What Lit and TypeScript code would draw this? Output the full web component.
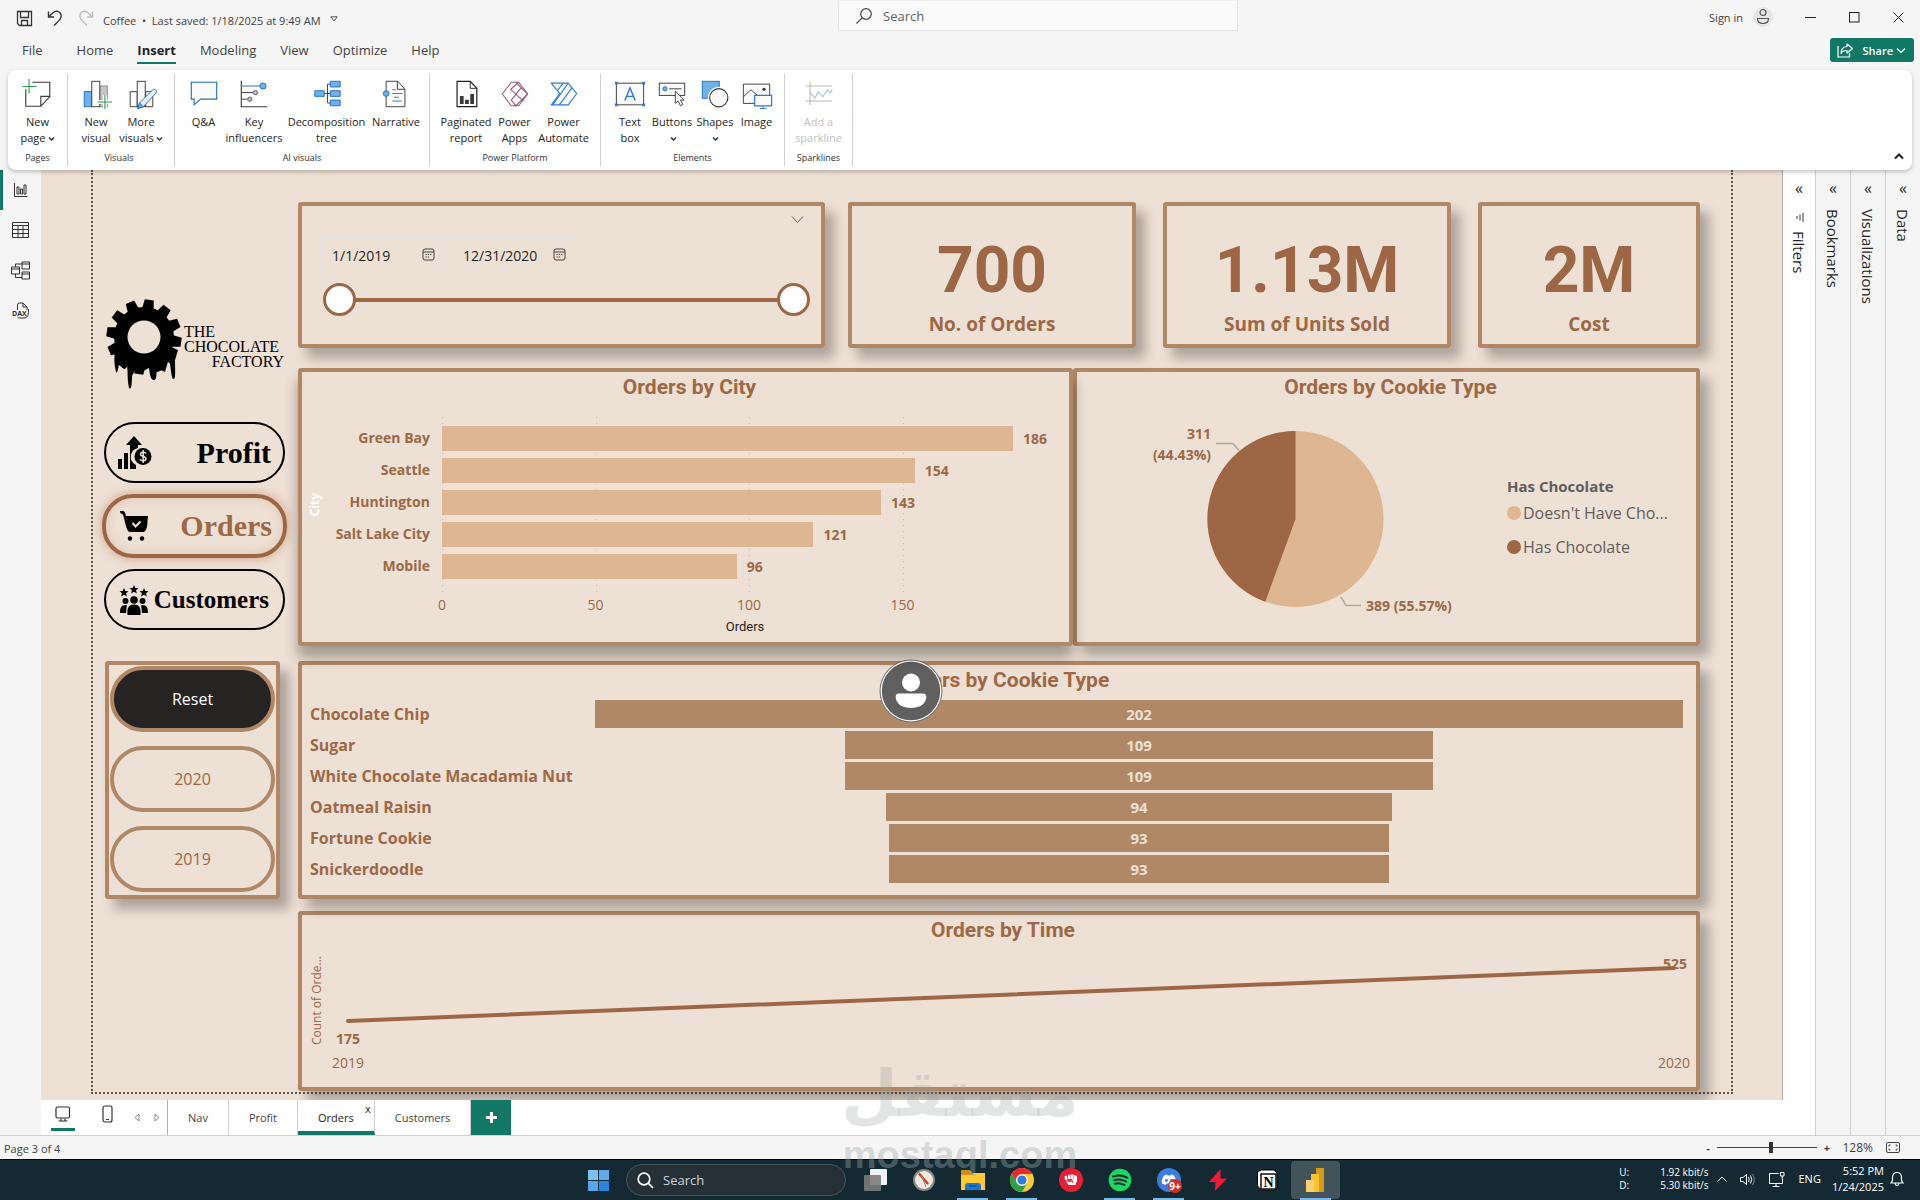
import { LitElement, html, svg, css, TemplateResult, SVGTemplateResult } from "lit";
import { customElement, state } from "lit/decorators.js";
import { classMap } from "lit/directives/class-map.js";
import { styleMap } from "lit/directives/style-map.js";

const INK = "#3b3a39";
const BLUE = "#1f6fc0";
const SKY = "#6fb1e8";
const GREEN = "#2f9e5a";

type Tool = { label: string[]; icon: SVGTemplateResult; width: number; menu?: boolean; off?: boolean };
type Group = { name: string; tools: Tool[] };

const caret = html`<svg class="caret" width="7" height="6" viewBox="0 0 7 6"><path d="M1 1.500 3.500 4 6 1.500" fill="none" stroke="#333" stroke-width="1.500" /></svg>`;

const toolIcons = {
  page: svg`<path d="M12 4.500H30.500V20L21 30H5V12M30.500 19.500H21V30" fill="none" stroke="${INK}" stroke-width="1.200"/><path d="M8.500 1V16.500M1.500 9H16.500" stroke="${GREEN}" stroke-width="1.200"/>`,
  visual: svg`<rect x="5.500" y="14.500" width="8" height="16" fill="${SKY}" stroke="${BLUE}"/><rect x="22" y="8.500" width="8" height="22" fill="#c8c6c4" stroke="#8a8886"/><rect x="13.500" y="3.500" width="8.500" height="27" fill="#fafafa" stroke="${INK}"/><path d="M27.500 18V33M20 25.500H35" stroke="#fff" stroke-width="4"/><path d="M27.500 18V33M20 25.500H35" stroke="${GREEN}" stroke-width="1.200"/>`,
  more: svg`<path d="M6.500 14.500H14V30.500H6.500ZM23 14.500H30.500V30.500H23Z" fill="#fafafa" stroke="${INK}"/><rect x="14" y="3.500" width="8.500" height="27" fill="#fafafa" stroke="${INK}"/><path d="M14.500 32.500 16.500 26.500 30.500 12.500C32.500 11 35.500 13.500 34 16L20.500 30.500Z" fill="#e6f1fb" stroke="${BLUE}"/><path d="M14.500 32.500 16.500 26.500 20.500 30.500Z" fill="${SKY}" stroke="${BLUE}"/>`,
  qa: svg`<path d="M4.500 4.500H31.500V22.500H14.500L7.500 28.500V22.500H4.500Z" fill="#fafafa" stroke="${BLUE}" stroke-width="1.200"/>`,
  key: svg`<path d="M4.500 3V30.500H32" fill="none" stroke="${INK}" stroke-width="1.200"/><path d="M5 8.500H24" stroke="${BLUE}"/><path d="M5 15.500H17M5 22.500H11" stroke="${INK}"/><circle cx="27.500" cy="8.500" r="3.300" fill="${SKY}" stroke="${BLUE}"/><circle cx="19.500" cy="15.500" r="2.300" fill="#bbb" stroke="#605e5c"/><circle cx="13.500" cy="22.500" r="2.300" fill="#bbb" stroke="#605e5c"/>`,
  tree: svg`<path d="M15 16.500H22M18.500 6.500V26.500M18.500 6.500H22M18.500 26.500H22" fill="none" stroke="${INK}"/><path d="M5 13.500H15V19.500H5ZM21.500 3.500H32V9.500H21.500ZM21.500 13.500H32V19.500H21.500ZM21.500 23.500H32V29.500H21.500Z" fill="${SKY}" stroke="${BLUE}"/>`,
  narrative: svg`<path d="M7.500 3.500H20L27.500 12V30.500H7.500Z" fill="#fafafa" stroke="${INK}"/><path d="M19.500 3.500V12H27.500" fill="none" stroke="${INK}"/><path d="M14 12.500H18M14 16.500H25M16 20.500H21M14 24.500H24" stroke="#2b7cd3"/><circle cx="7.500" cy="16.500" r="3" fill="${SKY}" stroke="${BLUE}"/>`,
  report: svg`<path d="M8.500 3.500H22.500L29.500 11V30.500H8.500Z" fill="#fff" stroke="#222" stroke-width="1.300"/><path d="M22.500 3.500V11H29.500" fill="none" stroke="#222"/><path d="M11.500 19H15.500V27.500H11.500ZM17 23H21V27.500H17ZM22.500 17H26.500V27.500H22.500Z" fill="#3b3a39"/>`,
  apps: svg`<g fill="none" stroke="#93627f" stroke-width="1.200" stroke-linejoin="round"><path d="M19 4.500H14L4.500 17 14 29.500H19L31.500 17 22 4.500H17"/><path d="M17 29.500H22L31.500 17"/><path d="M19 4.500 24.500 10.500 14 23.500 19 29.500M22 4.500 13.500 12 27 24.500M24.500 10.500 31.500 17M19 17 24.500 10.500"/></g>`,
  automate: svg`<g fill="none" stroke="#2b7cd3" stroke-width="1.200" stroke-linejoin="round"><path d="M4.500 5.500H22.500L31.500 16.500 22.500 28.500H4.500L13.500 16.500Z"/><path d="M22.500 5.500 6 28.500M26.500 10.500 13 28.500M17 5.500 11 13.500"/></g>`,
  text: svg`<rect x="3.500" y="5.500" width="29" height="23" fill="#fafafa" stroke="${INK}"/><path d="M2 4H5V7H2ZM31 4H34V7H31ZM2 27H5V30H2ZM31 27H34V30H31Z" fill="#2b7cd3"/><path d="M12.500 24 18 10.500 23.500 24M14.500 19.500H21.500" fill="none" stroke="#2b7cd3" stroke-width="1.500"/>`,
  buttons: svg`<rect x="4.500" y="5.500" width="27" height="13" fill="#fafafa" stroke="${INK}"/><circle cx="10.500" cy="11.500" r="2.200" fill="${SKY}" stroke="${BLUE}"/><path d="M15 11.500H28" stroke="${INK}"/><path d="M21.500 14V27L24.500 24.500 27 29.500 29.500 28 27 23.500H31Z" fill="#fff" stroke="${INK}"/>`,
  shapes: svg`<rect x="4.500" y="3.500" width="18" height="18" fill="${SKY}" stroke="${BLUE}"/><circle cx="22" cy="21" r="11.500" fill="#fff"/><circle cx="22" cy="21" r="9.700" fill="#fafafa" stroke="${INK}" stroke-width="1.200"/>`,
  image: svg`<path d="M3.500 6.500H31.500V27H3.500Z" fill="#fafafa" stroke="${INK}"/><path d="M3.500 20 11.500 12.500 18 18" fill="none" stroke="${INK}"/><circle cx="25.500" cy="12" r="1.700" fill="${INK}"/><path d="M15.500 18.500H33.500V29.500H15.500Z" fill="#fff" stroke="#2b7cd3" stroke-width="1.300"/><path d="M24.500 30V32.500M21 32.500H28" stroke="#2b7cd3"/>`,
  spark: svg`<path d="M4 8.500H32M4 24.500H32M8.500 4V29" stroke="#b9b2ac"/><path d="M8.500 15 13.500 21.500 17.500 14.500 22 20 27 12.500 30 16 32 12.500" fill="none" stroke="#a9c8e6" stroke-width="1.300"/>`,
};

const groups: Group[] = [
  { name: "Pages", tools: [{ label: ["New", "page"], icon: toolIcons.page, width: 59, menu: true }] },
  {
    name: "Visuals",
    tools: [
      { label: ["New", "visual"], icon: toolIcons.visual, width: 44 },
      { label: ["More", "visuals"], icon: toolIcons.more, width: 46, menu: true },
    ],
  },
  {
    name: "AI visuals",
    tools: [
      { label: ["Q&A"], icon: toolIcons.qa, width: 43 },
      { label: ["Key", "influencers"], icon: toolIcons.key, width: 58 },
      { label: ["Decomposition", "tree"], icon: toolIcons.tree, width: 87 },
      { label: ["Narrative"], icon: toolIcons.narrative, width: 52 },
    ],
  },
  {
    name: "Power Platform",
    tools: [
      { label: ["Paginated", "report"], icon: toolIcons.report, width: 56 },
      { label: ["Power", "Apps"], icon: toolIcons.apps, width: 41 },
      { label: ["Power", "Automate"], icon: toolIcons.automate, width: 57 },
    ],
  },
  {
    name: "Elements",
    tools: [
      { label: ["Text", "box"], icon: toolIcons.text, width: 42 },
      { label: ["Buttons", ""], icon: toolIcons.buttons, width: 42, menu: true },
      { label: ["Shapes", ""], icon: toolIcons.shapes, width: 44, menu: true },
      { label: ["Image"], icon: toolIcons.image, width: 39 },
    ],
  },
  { name: "Sparklines", tools: [{ label: ["Add a", "sparkline"], icon: toolIcons.spark, width: 67, off: true }] },
];

@customElement("pbi-ribbon")
export class PbiRibbon extends LitElement {
  static styles = css`
    :host { display: block; position: relative; z-index: 20; margin: 0 8px; font-family: "Open Sans", "Noto Sans", sans-serif; }
    .bar { display: flex; height: 100px; background: #fff; border-radius: 8px; box-shadow: 0 2px 4px rgba(0, 0, 0, 0.22); }
    .group { display: flex; flex-direction: column; margin: 4px 0; padding: 0 8px; border-right: 1px solid #d1d1d1; }
    .group:first-child, .group:nth-child(6) { padding: 0; }
    .group:nth-child(2) { padding: 0 10px 0 6px; }
    .group:nth-child(3) { padding: 0 7px; }
    .tools { display: flex; flex: 1; align-items: flex-start; }
    .tool { display: flex; flex-direction: column; align-items: center; padding: 4px 0 0; border: 0; background: none; font: 11px/16px "Open Sans", "Noto Sans", sans-serif; color: #242424; white-space: nowrap; }
    .tool svg { flex: none; }
    .tool .label { display: flex; flex-direction: column; align-items: center; margin-top: 4px; }
    .tool .line { height: 16px; }
    .tool:disabled { color: #c3c1bf; }
    .name { font-size: 9px; line-height: 14px; text-align: center; color: #333; padding-bottom: 1px; }
    .caret { margin-left: 2px; }
    .collapse { margin: auto 7px 8px auto; padding: 0; border: 0; background: none; width: 12px; height: 12px; display: grid; place-items: center; }
  `;
  render() {
    return html`<div class="bar">
      ${groups.map(
        (g) => html`<section class="group" aria-label=${g.name}>
          <div class="tools">
            ${g.tools.map(
              (t) => html`<button class="tool" style=${styleMap({ width: `${t.width}px` })} ?disabled=${t.off}>
                <svg width="36" height="32" viewBox="0 0 36 34" aria-hidden="true">${t.icon}</svg>
                <span class="label">${t.label.map((l, i) => html`<span class="line">${l}${t.menu && i === 1 ? caret : ""}</span>`)}</span>
              </button>`
            )}
          </div>
          <div class="name">${g.name}</div>
        </section>`
      )}
      <button class="collapse" aria-label="Collapse ribbon">
        <svg width="10" height="7" viewBox="0 0 10 7"><path d="M1 5.500 5 1.500 9 5.500" fill="none" stroke="#222" stroke-width="2" /></svg>
      </button>
    </div>`;
  }
}

@customElement("pbi-header")
export class PbiHeader extends LitElement {
  static styles = css`
    :host { display: block; background: #f5f5f5; font-family: "Open Sans", "Noto Sans", sans-serif; color: #424242; }
    button { border: 0; background: none; padding: 0; font: inherit; color: inherit; }
    .title { display: grid; grid-template-columns: 838fr 400px 682fr; align-items: start; height: 34px; }
    .quick { display: flex; align-items: center; gap: 14px; padding: 8px 0 0 16px; }
    .quick button { display: grid; }
    .doc { display: flex; align-items: center; gap: 9px; font-size: 11px; line-height: 16px; margin: 5px 0 0 -6px; white-space: nowrap; }
    .doc svg { margin-top: -4px; }
    .search { display: flex; align-items: center; gap: 10px; box-sizing: border-box; height: 31px; padding: 0 16px; background: #fafafa; border: 1px solid #e4e4e4; border-top-color: #efefef; }
    .search input { flex: 1; border: 0; outline: 0; background: none; padding: 0; font: 13px/18px "Open Sans", "Noto Sans", sans-serif; color: #424242; }
    .search input::placeholder { color: #616161; opacity: 1; }
    .right { display: flex; justify-content: flex-end; align-items: center; height: 34px; padding-right: 16px; font-size: 11px; }
    .user { display: grid; place-items: center; margin: 0 32px 0 10px; }
    .win { display: flex; gap: 33px; }
    .win button { display: grid; place-items: center; width: 11px; height: 11px; }
    .menu { display: flex; align-items: center; height: 36px; padding: 0 6px 0 22px; }
    .menu nav { display: flex; gap: 24px; flex: 1; }
    .menu a { color: #424242; text-decoration: none; font-size: 13px; line-height: 20px; padding: 3px 0 2px; border-bottom: 2px solid transparent; margin-bottom: 4px; }
    .menu a:first-child { margin-right: 10px; }
    .menu a.on { color: #242424; font-weight: 700; border-color: #117865; }
    .share { display: flex; align-items: center; gap: 8px; height: 24px; padding: 0 8px 0 7px; background: #117865; border-radius: 3px; color: #fff; font-size: 11px; font-weight: 600; margin-top: -4px; }
    .share svg + span { margin-right: -5px; }
  `;
  render() {
    const tabs = ["File", "Home", "Insert", "Modeling", "View", "Optimize", "Help"];
    return html`
      <div class="title">
        <div class="quick">
          <button aria-label="Save"><svg width="17" height="17" viewBox="0 0 17 17"><path d="M1.500 1.500H15.500V15.500H3.500L1.500 13.500ZM4.500 1.500V7.500H12.500V1.500M5.500 15.500V10.500H11.500V15.500" fill="none" stroke="#333" stroke-width="1.300" /></svg></button>
          <button aria-label="Undo"><svg width="17" height="17" viewBox="0 0 17 17"><path d="M1.500 1.500V7H7M1.500 7 6 2.800C9 .2 13 1.200 14 4.500 15 8 12.500 10.500 7 15.500" fill="none" stroke="#333" stroke-width="1.400" /></svg></button>
          <button aria-label="Redo"><svg width="17" height="17" viewBox="0 0 17 17"><path d="M14.500 1.500V7H9M14.500 7 10 2.800C7 .2 3 1.200 2 4.500 1 8 3.500 10.500 9 15.500" fill="none" stroke="#bbb" stroke-width="1.400" /></svg></button>
          <div class="doc"><span>Coffee&nbsp; •&nbsp; Last saved: 1/18/2025 at 9:49 AM</span><svg width="8" height="6" viewBox="0 0 8 6"><path d="M.8 .8H7.200L4 5Z" fill="none" stroke="#555" /></svg></div>
        </div>
        <label class="search"><svg width="18" height="18" viewBox="0 0 18 18"><circle cx="11" cy="7" r="5.300" fill="none" stroke="#444" stroke-width="1.200" /><path d="M7.200 10.800 1.500 16.500" stroke="#444" stroke-width="1.200" /></svg><input type="text" placeholder="Search" aria-label="Search" /></label>
        <div class="right">
          <button>Sign in</button>
          <button class="user" aria-label="Account"><svg width="20" height="20" viewBox="0 0 20 20"><circle cx="10" cy="10" r="10" fill="#e6e6e6" /><circle cx="10" cy="5.500" r="3" fill="none" stroke="#555" stroke-width="1.200" /><path d="M4.500 11.500H15.500C15.500 15 13 16.500 10 16.500S4.500 15 4.500 11.500Z" fill="none" stroke="#555" stroke-width="1.200" /></svg></button>
          <div class="win">
            <button aria-label="Minimize"><svg width="11" height="11"><path d="M0 5.500H11" stroke="#222" /></svg></button>
            <button aria-label="Maximize"><svg width="11" height="11"><rect x=".5" y=".5" width="9.500" height="9.500" fill="none" stroke="#222" /></svg></button>
            <button aria-label="Close"><svg width="11" height="11"><path d="M.5 .5 10.500 10.500M10.500 .5 .5 10.500" stroke="#222" /></svg></button>
          </div>
        </div>
      </div>
      <div class="menu">
        <nav>${tabs.map((t) => html`<a href="#${t}" class=${classMap({ on: t === "Insert" })}>${t}</a>`)}</nav>
        <button class="share"><svg width="17" height="15" viewBox="0 0 17 15"><path d="M1 3V14H12.500V10" fill="none" stroke="#fff" stroke-width="1.200" /><path d="M10 1 15.500 5.500 10 10V7.500C7 7.300 5 8.500 4 10.500 4 6.500 6.500 3.800 10 3.500Z" fill="none" stroke="#fff" stroke-width="1.200" stroke-linejoin="round" /></svg><span>Share</span><svg width="10" height="7" viewBox="0 0 10 7"><path d="M1 1.500 5 5.500 9 1.500" fill="none" stroke="#fff" stroke-width="1.200" /></svg></button>
      </div>
      <pbi-ribbon></pbi-ribbon>
    `;
  }
}

const sheet = css`
  .card { box-sizing: border-box; border: 4px solid #b18865; border-radius: 3px; box-shadow: 9px 10px 12px rgba(0, 0, 0, 0.28); }
  h2 { margin: 0; padding: 3px 0 0 8px; font: 700 21px/24px Roboto, sans-serif; color: #9f6844; text-align: center; }
`;

@customElement("report-sidebar")
export class ReportSidebar extends LitElement {
  @state() year = "Reset";
  static styles = [
    sheet,
    css`
      :host { display: flex; flex-direction: column; width: 175px; padding-top: 128px; }
      .logo { display: block; overflow: visible; }
      nav { display: flex; flex-direction: column; gap: 11px; margin: 32px -7px 31px -3px; }
      .link { display: flex; align-items: center; justify-content: space-between; box-sizing: border-box; height: 61px; margin: 0 2px; padding: 0 12px; border: 2px solid #000; border-radius: 31px; color: #000; text-decoration: none; font: 700 30px/40px "Liberation Serif", serif; }
      .link.on { height: 64px; margin: 0; padding: 0 11px 0 14px; border: 4px solid #9d6745; color: #9f6844; box-shadow: 0 0 10px 1px rgba(190, 110, 60, 0.45), inset 0 0 10px rgba(190, 110, 60, 0.25); }
      .link.small { font-size: 25px; padding: 0 14px 0 12px; }
      .years { display: flex; flex-direction: column; justify-content: space-between; height: 238px; padding: 1px 1px 3px; }
      .year { box-sizing: border-box; height: 66px; padding: 0; border: 4px solid #b18865; border-radius: 33px; background: none; font: 16px/24px "Open Sans", "Noto Sans", sans-serif; color: #9f6844; }
      .year.on { background: #252423; color: #fff; }
    `,
  ];
  render() {
    const teeth = Array.from({ length: 12 }, (_, i) => 8 + i * 30);
    return html`
      <svg class="logo" width="180" height="92" viewBox="0 0 180 92" role="img" aria-label="The Chocolate Factory">
        <circle cx="39" cy="39" r="30" />
        ${teeth.map((a) => svg`<path d="M33 12 34.500 1.500H43.500L45 12Z" transform="rotate(${a} 39 39)" />`)}
        <path d="M10 52C9 60 9 66 11 74 12 76 13 72 14 66L18 70 22 66C23 74 22 82 24 90 26 92 27 88 27 78L30 72 36 74 44 70C45 78 46 82 49 82 52 82 51 76 52 70L60 74 64 60C66 70 66 78 68 81 71 82 70 74 70 62L73 52 60 46H20Z" />
        <circle cx="39" cy="39" r="16.500" fill="#ede0d4" />
        <g font-family="Liberation Serif, serif" font-size="16"><text x="79" y="39">THE</text><text x="79" y="54">CHOCOLATE</text><text x="179" y="69" text-anchor="end">FACTORY</text></g>
      </svg>
      <nav>
        <a class="link" href="#profit">
          <svg width="34" height="34" viewBox="0 0 34 34"><path d="M0 23H4V33H0ZM6 17H10V33H6ZM12 33V9H8L16 0 24 9H20V12A9 9 0 0 0 18 29V33Z" /><circle cx="25" cy="20.500" r="8.500" /><path d="M28 17.500C27 15.500 22.500 16 22.500 18.300 22.500 21 28 20 28 22.800 28 25.200 23 25.500 22 23.200M25.200 14V27" fill="none" stroke="#ede0d4" stroke-width="1.500" /></svg>
          Profit
        </a>
        <a class="link on" href="#orders">
          <svg width="30" height="32" viewBox="0 0 30 32"><path d="M0 1H3C4.500 1 5.500 3 6 6H28C27 14 28 19 24 22H9C5 18 5 8 2.500 4 1 4 0 3 0 1Z" /><circle cx="10" cy="28.500" r="2.200" /><circle cx="22" cy="28.500" r="2.200" /><path d="M12.500 13 15.500 16.500 20.500 11.500" fill="none" stroke="#ede0d4" stroke-width="2" /></svg>
          Orders
        </a>
        <a class="link small" href="#customers">
          <svg width="32" height="32" viewBox="0 0 32 32">
            <path d="M16 1 17.300 4 20.500 4.200 18 6.300 18.900 9.500 16 7.700 13.100 9.500 14 6.300 11.500 4.200 14.700 4Z" /><path d="M6 4 7.300 7 10.500 7.200 8 9.300 8.900 12.500 6 10.700 3.100 12.500 4 9.300 1.500 7.200 4.700 7ZM26 4 27.300 7 30.500 7.200 28 9.300 28.900 12.500 26 10.700 23.100 12.500 24 9.300 21.500 7.200 24.700 7Z" />
            <circle cx="16" cy="16" r="3.800" /><circle cx="7.500" cy="17" r="3" /><circle cx="24.500" cy="17" r="3" />
            <path d="M9.500 31C9 25 10 20.500 16 20.500S23 25 22.500 31ZM2 29C2 24 3 21 8 21 9 21 9 22 8.500 24L8 29ZM30 29C30 24 29 21 24 21 23 21 23 22 23.500 24L24 29Z" />
          </svg>
          Customers
        </a>
      </nav>
      <div class="card years" role="group" aria-label="Year">
        ${["Reset", "2020", "2019"].map((y) => html`<button class=${classMap({ year: true, on: this.year === y })} @click=${() => (this.year = y)}>${y}</button>`)}
      </div>
    `;
  }
}

@customElement("report-visuals")
export class ReportVisuals extends LitElement {
  static styles = [
    sheet,
    css`
      :host { display: flex; flex-direction: column; flex: 1; min-width: 0; padding-top: 32px; font-family: "Open Sans", "Noto Sans", sans-serif; color: #9f6844; }
      .row { display: grid; position: relative; }
      .row > * { min-width: 0; }
      .row:nth-child(1) { height: 146px; grid-template-columns: 527fr 852fr; gap: 23px; z-index: 4; }
      .row:nth-child(2) { height: 278px; grid-template-columns: 775fr 627fr; margin-top: 20px; z-index: 3; }
      .row:nth-child(3) { height: 238px; margin-top: 15px; z-index: 2; }
      .row:nth-child(4) { height: 180px; margin-top: 12px; z-index: 1; }
      .dates { display: flex; flex-direction: column; padding: 7px 11px 0 18px; }
      .more { align-self: flex-end; margin: 0 5px 0 0; padding: 2px 0 0; border: 0; background: none; height: 25px; width: 14px; display: flex; align-items: flex-start; }
      .fields { display: flex; gap: 8px; }
      .field { display: flex; align-items: center; box-sizing: border-box; width: 123px; height: 36px; padding: 0 7px 0 11px; border: 1px dashed #e0e6e8; }
      .field input { flex: 1; min-width: 0; padding: 0; border: 0; outline: 0; background: none; font: 14px/20px "Open Sans", "Noto Sans", sans-serif; color: #252423; }
      .field svg { margin-top: -3px; }
      .slider { display: grid; align-items: center; margin: 8px 0 0 3px; height: 35px; }
      .slider > * { grid-area: 1 / 1; }
      .track { height: 4px; margin: 0 16px; background: #9d6745; }
      .slider input { appearance: none; -webkit-appearance: none; width: 100%; height: 33px; margin: 0; background: none; pointer-events: none; }
      .slider input::-webkit-slider-thumb { -webkit-appearance: none; box-sizing: border-box; width: 33px; height: 33px; border: 3px solid #9d6745; border-radius: 50%; background: #fff; pointer-events: auto; }
      .kpis { display: grid; grid-template-columns: 288fr 288fr 222fr; gap: 27px; }
      .kpi { display: flex; flex-direction: column; align-items: center; padding-top: 28px; }
      .value { font: 700 64px/74px Roboto, sans-serif; color: #9d6644; }
      .caption { font-size: 19px; line-height: 28px; font-weight: 700; margin-top: 2px; }
      .bars { display: flex; flex-direction: column; position: relative; z-index: 1; box-shadow: 0 12px 14px rgba(0, 0, 0, 0.32); }
      .plotwrap { display: grid; grid-template-columns: 128px 1fr; column-gap: 12px; padding: 18px 13px 0 0; }
      .ylab { grid-column: 1; display: flex; align-items: center; }
      .city { writing-mode: vertical-rl; transform: rotate(180deg); color: #fff; font: 700 12px/26px "Open Sans", sans-serif; text-align: center; }
      .cats { flex: 1; display: flex; flex-direction: column; gap: 7px; padding-bottom: 6px; text-align: right; font-weight: 700; font-size: 14px; line-height: 25px; }
      .plot { position: relative; display: flex; flex-direction: column; gap: 7px; padding: 9px 0 13px; }
      .grid { position: absolute; inset: 0; display: flex; }
      .grid i { width: 25%; background: repeating-linear-gradient(#c9bcb0 0 1px, transparent 1px 6px) left / 1px 100% no-repeat; }
      .bar { position: relative; display: flex; align-items: center; gap: 10px; font-weight: 700; font-size: 14px; line-height: 25px; }
      .bar i { height: 25px; background: #deb691; flex: none; }
      .axis { grid-column: 2; display: flex; font-size: 14px; line-height: 20px; padding-top: 3px; }
      .axis span { width: 25%; }
      .axis b { display: inline-block; font-weight: 400; transform: translateX(-50%); }
      .xtitle { grid-column: 2; font: 13px/18px Roboto, sans-serif; color: #252423; text-align: center; padding: 3px 8px 0 0; }
      .pie { display: flex; flex-direction: column; }
      .piebody { display: flex; flex: 1; justify-content: space-between; padding: 3px 0 0 4px; }
      .piebody text { font: 700 14px "Open Sans", "Noto Sans", sans-serif; fill: #9f6844; }
      .legend { width: 189px; padding-top: 72px; color: #605e5c; font-size: 16px; }
      .legend h3 { margin: 0; font-size: 15px; line-height: 24px; font-weight: 700; }
      .legend ul { margin: 3px 0 0; padding: 0; list-style: none; }
      .legend li { display: flex; align-items: center; gap: 2px; line-height: 24px; margin-bottom: 10px; white-space: nowrap; }
      .dot { width: 14px; height: 14px; border-radius: 50%; background: #deb691; }
      .dot.dark { background: #9d6644; }
      .funnel { display: flex; flex-direction: column; }
      .frows { display: grid; grid-template-columns: 285px 1fr; row-gap: 3px; padding: 8px 13px 0 8px; font-size: 16px; line-height: 28px; font-weight: 700; }
      .frows .fb { display: flex; justify-content: center; }
      .fb span { background: #b18865; color: #ede0d4; text-align: center; font-size: 15px; }
      .badge { position: absolute; left: 581px; top: -2px; }
      .time { display: flex; flex-direction: column; }
      .trend { display: grid; grid-template-columns: 24px 1fr; flex: 1; padding: 0 5px 12px 5px; }
      .yt { writing-mode: vertical-rl; transform: rotate(180deg); font-size: 12px; line-height: 20px; margin-bottom: 16px; text-align: center; align-self: center; width: 20px; }
      .tplot { position: relative; display: flex; flex-direction: column; }
      .tplot svg { display: block; width: calc(100% - 34px); height: 53px; margin: 26px 17px 0; overflow: visible; }
      .ends { display: flex; justify-content: space-between; font-size: 14px; line-height: 20px; }
      .ends span { width: 34px; text-align: center; }
      .first { font-weight: 700; padding: 8px 0 4px; }
      .last { position: absolute; right: 4px; top: 12px; font-weight: 700; font-size: 14px; line-height: 20px; }
    `,
  ];

  private calendar = html`<svg width="13" height="13" viewBox="0 0 13 13" aria-hidden="true"><rect x="1" y="1" width="11" height="11" rx="2" fill="none" stroke="#444" /><path d="M1 4H12" stroke="#444" /><path d="M3.500 6.500H10M3.500 9H8" stroke="#444" stroke-dasharray="1.300 1" /></svg>`;

  private kpi(value: string, caption: string): TemplateResult {
    return html`<div class="card kpi"><div class="value">${value}</div><div class="caption">${caption}</div></div>`;
  }

  render() {
    const cities: [string, number][] = [["Green Bay", 186], ["Seattle", 154], ["Huntington", 143], ["Salt Lake City", 121], ["Mobile", 96]];
    const cookies: [string, number][] = [["Chocolate Chip", 202], ["Sugar", 109], ["White Chocolate Macadamia Nut", 109], ["Oatmeal Raisin", 94], ["Fortune Cookie", 93], ["Snickerdoodle", 93]];
    return html`
      <div class="row">
        <div class="card dates">
          <button class="more" aria-label="Slicer type"><svg width="13" height="9" viewBox="0 0 13 9"><path d="M1 1.500 6.500 7.500 12 1.500" fill="none" stroke="#5f6175" /></svg></button>
          <div class="fields">
            <label class="field"><input type="text" value="1/1/2019" aria-label="Start date" />${this.calendar}</label>
            <label class="field"><input type="text" value="12/31/2020" aria-label="End date" />${this.calendar}</label>
          </div>
          <div class="slider">
            <div class="track"></div>
            <input type="range" min="0" max="730" value="0" aria-label="Range start" />
            <input type="range" min="0" max="730" value="730" aria-label="Range end" />
          </div>
        </div>
        <div class="kpis">${this.kpi("700", "No. of Orders")}${this.kpi("1.13M", "Sum of Units Sold")}${this.kpi("2M", "Cost")}</div>
      </div>

      <div class="row">
        <section class="card bars">
          <h2>Orders by City</h2>
          <div class="plotwrap">
            <div class="ylab">
              <span class="city">City</span>
              <div class="cats">${cities.map(([c]) => html`<span>${c}</span>`)}</div>
            </div>
            <div class="plot">
              <div class="grid"><i></i><i></i><i></i><i></i></div>
              ${cities.map(([, v]) => html`<div class="bar"><i style=${styleMap({ width: `${v / 2}%` })}></i><span>${v}</span></div>`)}
            </div>
            <div class="axis">${[0, 50, 100, 150].map((v) => html`<span><b>${v}</b></span>`)}</div>
            <div class="xtitle">Orders</div>
          </div>
        </section>
        <section class="card pie">
          <h2>Orders by Cookie Type</h2>
          <div class="piebody">
            <svg width="400" height="236" viewBox="0 0 400 236" role="img" aria-label="Orders by chocolate content">
              <circle cx="214.500" cy="117" r="88" fill="#deb691" />
              <path d="M214.500 117 184.300 199.700A88 88 0 0 1 214.500 29Z" fill="#9d6644" />
              <path d="M135 41.500H152L158 48.500M260 195 265 203.500H280" fill="none" stroke="#b3a89e" stroke-width="1.500" />
              <text x="130" y="37" text-anchor="end">311</text>
              <text x="130" y="58" text-anchor="end">(44.43%)</text>
              <text x="285" y="209">389 (55.57%)</text>
            </svg>
            <div class="legend">
              <h3>Has Chocolate</h3>
              <ul>
                <li><span class="dot"></span>Doesn't Have Cho...</li>
                <li><span class="dot dark"></span>Has Chocolate</li>
              </ul>
            </div>
          </div>
        </section>
      </div>

      <div class="row">
        <section class="card funnel">
          <h2>Orders by Cookie Type</h2>
          <div class="frows">
            ${cookies.map(([n, v]) => html`<span>${n}</span><div class="fb"><span style=${styleMap({ width: `${(v / 202) * 100}%` })}>${v}</span></div>`)}
          </div>
        </section>
        <svg class="badge" width="64" height="64" viewBox="0 0 64 64" role="img" aria-label="User"><circle cx="32" cy="32" r="31" fill="#606060" stroke="#777" /><circle cx="32" cy="32" r="29.800" fill="none" stroke="#fff" stroke-width="1.200" /><circle cx="32" cy="23.500" r="9" fill="#fff" /><path d="M20.500 34.500H43.500C46.500 34.500 47.500 36 47.300 38.500 46.500 45.500 40 49 32 49S17.500 45.500 16.700 38.500C16.500 36 17.500 34.500 20.500 34.500Z" fill="#fff" /></svg>
      </div>

      <div class="row">
        <section class="card time">
          <h2>Orders by Time</h2>
          <div class="trend">
            <span class="yt">Count of Orde...</span>
            <div class="tplot">
              <svg viewBox="0 0 100 53" preserveAspectRatio="none" role="img" aria-label="Orders from 2019 to 2020"><path d="M0 53 100 0" fill="none" stroke="#9d6745" stroke-width="4" stroke-linecap="round" vector-effect="non-scaling-stroke" /></svg>
              <span class="last">525</span>
              <div class="ends first"><span>175</span></div>
              <div class="ends"><span>2019</span><span>2020</span></div>
            </div>
          </div>
        </section>
      </div>
    `;
  }
}

@customElement("pbi-taskbar")
export class PbiTaskbar extends LitElement {
  static styles = css`
    :host { display: grid; grid-template-columns: 1fr auto 1fr; height: 41px; background: #132a33; color: #fff; font-family: "Open Sans", "Noto Sans", sans-serif; box-sizing: border-box; border-top: 1px solid #000; }
    button { border: 0; background: none; padding: 0; color: inherit; font: inherit; }
    .mid { grid-column: 2; display: flex; align-items: center; margin-left: 8px; }
    .start { display: grid; margin-right: 17px; }
    .search { display: flex; align-items: center; gap: 9px; box-sizing: border-box; width: 220px; height: 32px; padding: 0 10px; border: 1px solid #4b565b; border-radius: 16px; background: #242f36; margin-right: 4px; }
    .search input { width: 140px; padding: 0; border: 0; outline: 0; background: none; font: 13px/18px "Open Sans", sans-serif; color: #ddd; }
    .search input::placeholder { color: #d2d2d2; opacity: 1; }
    .app { position: relative; display: grid; place-items: center; width: 49px; height: 38px; }
    .app.run::after { content: ""; position: absolute; bottom: -1px; left: 9px; width: 31px; height: 2px; background: #76b9ed; }
    .app.cur { background: #43535a; border-radius: 4px; }
    .tray { grid-column: 3; display: flex; justify-content: flex-end; align-items: center; padding: 0 16px 2px 0; font-size: 11px; line-height: 14px; white-space: nowrap; }
    .net { display: grid; grid-template-columns: auto auto; column-gap: 31px; font-size: 10px; line-height: 13px; margin-right: 9px; }
    .net span:nth-child(even) { text-align: right; }
    .clock { font-size: 11px; line-height: 16px; text-align: right; margin: 0 6px 0 11px; }
    .tray svg { margin-right: 13px; flex: none; }
    .tray svg:last-child { margin-right: 0; }
  `;
  private apps: { name: string; run?: boolean; cur?: boolean; art: SVGTemplateResult }[] = [
    { name: "Task view", art: svg`<rect x="7" y="1" width="17" height="16" rx="1" fill="#f2f2f2"/><rect x="1" y="7" width="17" height="16" rx="1" fill="#7b7b7b" opacity=".9"/>` },
    { name: "Clock", art: svg`<circle cx="12" cy="12" r="11" fill="#8b8784"/><circle cx="12" cy="12" r="9" fill="#efe9e2"/><path d="M7 5.500 16 16" stroke="#c8401e" stroke-width="2.500"/><path d="M9 6 14 19" stroke="#888" stroke-width="1"/>` },
    { name: "File Explorer", run: true, art: svg`<path d="M0 2H9L11 5H24V10H0Z" fill="#d18f12"/><path d="M0 7H11L13 5H24V22H0Z" fill="#ffca36"/><path d="M4 22V18Q4 15 7 15H17Q20 15 20 18V22Z" fill="#1976d2"/><path d="M8 18H16" stroke="#0d4f9a" stroke-width="1.500"/>` },
    { name: "Chrome", run: true, art: svg`<circle cx="12" cy="12" r="12" fill="#fcc934"/><path d="M1.600 6A12 12 0 0 1 22.400 6H12A6 6 0 0 0 6.800 15Z" fill="#ea2a33"/><path d="M1.600 6A12 12 0 0 0 12 24L17.200 15A6 6 0 0 1 6.800 15Z" fill="#2aa14b"/><circle cx="12" cy="12" r="5.800" fill="#fff"/><circle cx="12" cy="12" r="4.600" fill="#2f7de1"/>` },
    { name: "Recorder", art: svg`<circle cx="12" cy="12" r="12" fill="#e91d36"/><path d="M5.500 8.500 8 7.500 8.500 12.500 6 12ZM9 7 11.500 6.500V11H9ZM12 6.500 14.500 6.500V11H12ZM15 7 18 8V12.500L16.500 17H9.500L7 13.500 13 12.500V11.500L15 11Z" fill="#fff"/><path d="M9.500 14 13.500 12.800 14 15" stroke="#e91d36" fill="none"/>` },
    { name: "Spotify", run: true, art: svg`<circle cx="12" cy="12" r="11.300" fill="#1ed760"/><path d="M5 8.500C10 7 15.500 7.500 19.500 9.800M6 12.300C10 11 14.500 11.500 18 13.500M7 15.800C10 15 13.500 15.300 16.500 17" fill="none" stroke="#132a33" stroke-width="2" stroke-linecap="round"/>` },
    { name: "Discord", run: true, art: svg`<circle cx="12" cy="12" r="12" fill="#3b7de0"/><path d="M7 7.500 10 6.500 10.500 7.500H13.500L14 6.500 17 7.500C19 10.500 19.500 13 19 15.500L15.500 17 14.500 15.500H9.500L8.500 17 5 15.500C4.500 13 5 10.500 7 7.500Z" fill="#fff"/><circle cx="9.500" cy="12.500" r="1.400" fill="#3b7de0"/><circle cx="14.500" cy="12.500" r="1.400" fill="#3b7de0"/><circle cx="18" cy="18" r="7" fill="#cf2f2b"/><text x="18" y="22" font-size="10" font-weight="700" text-anchor="middle" fill="#fff">9+</text>` },
    { name: "Bolt", art: svg`<path d="M14.500 1 3 14H9.500L9 23 21 10.500H14.500Z" fill="#ef1b36"/>` },
    { name: "Notion", art: svg`<path d="M2.500 4 6 2H19L22 5V20L19 22H6L2.500 18Z" fill="#fff" stroke="#000"/><path d="M6 6H21V21H6Z" fill="#f7f7f7" stroke="#111" stroke-width="1.500"/><text x="13.500" y="18.500" font-family="Liberation Serif, serif" font-size="14" font-weight="700" text-anchor="middle">N</text>` },
    { name: "Power BI", run: true, cur: true, art: svg`<path d="M12 0H20V24H12Z" fill="#d79a14"/><path d="M7 6H15V24H7Z" fill="#f5c32c"/><path d="M2 12H10V24H2Z" fill="#fbd075"/>` },
  ];
  render() {
    return html`
      <div class="mid">
        <button class="start" aria-label="Start"><svg width="21" height="21" viewBox="0 0 21 21"><path d="M0 0H10V10H0Z" fill="#7cc0f2"/><path d="M11 0H21V10H11Z" fill="#5fabea"/><path d="M0 11H10V21H0Z" fill="#58a6ea"/><path d="M11 11H21V21H11Z" fill="#2f84de"/></svg></button>
        <label class="search"><svg width="17" height="17" viewBox="0 0 17 17"><circle cx="7" cy="7" r="5.800" fill="none" stroke="#fff" stroke-width="1.700" /><path d="M11.200 11.200 16 16" stroke="#fff" stroke-width="1.700" /></svg><input type="text" placeholder="Search" aria-label="Search Windows" /></label>
        ${this.apps.map((a) => html`<button class=${classMap({ app: true, run: !!a.run, cur: !!a.cur })} aria-label=${a.name}><svg width="24" height="24" viewBox="0 0 24 24" overflow="visible">${a.art}</svg></button>`)}
      </div>
      <div class="tray">
        <div class="net"><span>U:</span><span>1.92 kbit/s</span><span>D:</span><span>5.30 kbit/s</span></div>
        <svg width="10" height="6" viewBox="0 0 10 6"><path d="M.5 5.500 5 1 9.500 5.500" fill="none" stroke="#fff" /></svg>
        <svg width="15" height="13" viewBox="0 0 15 13"><path d="M.5 4.500H3L6.500 1.500V11.500L3 8.500H.5ZM8.500 4Q10 6.500 8.500 9M10.500 2.500Q13 6.500 10.500 10.500" fill="none" stroke="#fff" /><path d="M12.500 1Q16 6.500 12.500 12" fill="none" stroke="#7d8b91" /></svg>
        <svg width="17" height="17" viewBox="0 0 17 17"><path d="M10.500 2.500H1.500V12.500H14.500V8M8 12.500V15.500M4.500 15.500H11.500M12.500 1.500H16V5H12.500ZM14.200 5V8" fill="none" stroke="#fff" /></svg>
        <span>ENG</span>
        <div class="clock">5:52 PM<br />1/24/2025</div>
        <svg width="14" height="16" viewBox="0 0 14 16"><path d="M1 12H13L11.500 9.500V6Q11 1.500 7 1.500T2.500 6V9.500ZM5 12.500Q5.500 14.500 7 14.500T9 12.500" fill="none" stroke="#fff" stroke-width="1.200" /></svg>
      </div>
    `;
  }
}

@customElement("app-root")
export class AppRoot extends LitElement {
  static styles = css`
    :host { display: flex; flex-direction: column; height: 100vh; position: relative; overflow: hidden; background: #f5f5f5; font-family: "Open Sans", "Noto Sans", sans-serif; }
    button { border: 0; background: none; padding: 0; font: inherit; color: inherit; }
    .body { display: flex; flex: 1; min-height: 0; }
    .rail { display: flex; flex-direction: column; width: 41px; background: #f5f5f5; }
    .rail button { display: grid; place-items: center; height: 40px; box-sizing: border-box; border-left: 3px solid transparent; padding-right: 3px; }
    .rail button.on { border-color: #117865; }
    .work { display: flex; flex-direction: column; flex: 1; min-width: 0; }
    .canvas { flex: 1; min-height: 0; box-sizing: border-box; padding: 0 49px 6px 50px; background: #ede0d4; overflow: hidden; border-right: 1px solid #b9ada2; display: flex; }
    .page { flex: 1; display: flex; gap: 18px; box-sizing: border-box; padding: 0 31px 0 12px; border: 2px dotted #5c5651; border-top: 0; }
    .tabs { display: flex; align-items: stretch; height: 35px; background: #fff; font-size: 11px; color: #333; }
    .view { display: grid; place-items: center; width: 24px; margin-left: 10px; border-bottom: 3px solid transparent; margin-bottom: 4px; }
    .view.on { border-color: #117865; }
    .view + .view { margin-left: 20px; }
    .arrows { display: flex; align-items: center; gap: 14px; margin: 0 7px 0 15px; }
    .arrows button { display: grid; }
    .tab { position: relative; display: grid; place-items: center; box-sizing: border-box; padding: 0 20px; border-right: 1px solid #d1d1d1; color: #444; text-decoration: none; }
    .arrows + .tab { border-left: 1px solid #b5b0ab; }
    .tab.on { color: #222; border-bottom: 4px solid #117865; padding-top: 4px; }
    .tab .x { position: absolute; right: 3px; top: 1px; line-height: 16px; }
    .add { width: 40px; background: #117865; display: grid; place-items: center; }
    .panes { display: flex; }
    .pane { display: flex; flex-direction: column; align-items: center; box-sizing: border-box; width: 35px; padding-top: 13px; border-right: 1px solid #d1d1d1; color: #252423; }
    .pane:first-child { width: 33px; background: #fff; }
    .pane:last-child { border: 0; width: 34px; }
    .pane .chev { font-size: 16px; line-height: 10px; }
    .pane .lab { display: flex; align-items: center; gap: 9px; writing-mode: vertical-rl; margin-top: 16px; font-size: 15px; line-height: 20px; font-weight: 500; }
    .pane:first-child .lab { margin-top: 20px; }
    .status { display: flex; align-items: center; height: 24px; box-sizing: border-box; border-top: 1px solid #d1d1d1; padding: 2px 20px 0 4px; font-size: 11px; color: #424242; }
    .zoom { display: flex; align-items: center; gap: 5px; margin-left: auto; margin-top: -2px; }
    .zoom input { appearance: none; -webkit-appearance: none; width: 100px; height: 12px; margin: 0; background: linear-gradient(#444, #444) center / 100% 1px no-repeat; }
    .zoom input::-webkit-slider-thumb { -webkit-appearance: none; width: 4px; height: 11px; background: #333; }
    .zoom .sign { width: 9px; text-align: center; font-weight: 700; }
    .zoom .pct { font-size: 12px; margin: 0 8px 0 6px; }
    .mark { position: absolute; left: 840px; bottom: 23px; width: 240px; display: flex; flex-direction: column; align-items: center; color: rgba(150, 160, 158, 0.27); pointer-events: none; z-index: 30; }
    .mark .ar { font: 700 65px/78px "DejaVu Sans", sans-serif; }
    .mark .en { font: 700 38px/44px "Liberation Sans", sans-serif; color: rgba(160, 170, 170, 0.38); }
  `;
  render() {
    const stroke = "#333";
    return html`
      <pbi-header></pbi-header>
      <div class="body">
        <div class="rail">
          <button class="on" aria-label="Report view"><svg width="15" height="15" viewBox="0 0 15 15"><path d="M1.500 0V13.500H14.500M4 11V4H6V11ZM7.500 11V6H9.500V11ZM11 11V2H13V11Z" fill="none" stroke="${stroke}" /></svg></button>
          <button aria-label="Table view"><svg width="17" height="16" viewBox="0 0 17 16"><path d="M.5 .5H16.500V15.500H.5ZM.5 3.500H16.500M.5 7.500H16.500M.5 11.500H16.500M6 3.500V15.500M11 3.500V15.500" fill="none" stroke="${stroke}" /></svg></button>
          <button aria-label="Model view"><svg width="19" height="19" viewBox="0 0 19 19"><path d="M.5 6H8.500V13H.5ZM.5 8H8.500M11 1H18.500V8H11ZM11 3H18.500M11 11H18.500V18H11ZM11 13H18.500M4.500 6V3H11M4.500 13V16.500H11" fill="none" stroke="${stroke}" /></svg></button>
          <button aria-label="DAX query view"><svg width="18" height="17" viewBox="0 0 18 17"><path d="M5.500 8V3Q5.500 1 7.500 1H11L15 5V8M11 1V5H15M5.500 15Q6 16 8 16H13Q17 15 16.500 7" fill="none" stroke="${stroke}" /><text x="0" y="14" font-size="7" font-weight="700" fill="${stroke}">DAX</text></svg></button>
        </div>
        <div class="work">
          <div class="canvas"><div class="page"><report-sidebar></report-sidebar><report-visuals></report-visuals></div></div>
          <div class="tabs">
            <button class="view on" aria-label="Desktop layout"><svg width="16" height="16" viewBox="0 0 16 16"><rect x="1" y="1" width="13.500" height="11" rx="1.500" fill="none" stroke="#333" stroke-width="1.200" /><path d="M6 12.500V14.500M10 12.500V14.500M3.500 15H12.500" stroke="#333" stroke-width="1.200" /></svg></button>
            <button class="view" aria-label="Mobile layout"><svg width="11" height="18" viewBox="0 0 11 18"><rect x="1" y="1" width="9" height="16" rx="2" fill="none" stroke="#333" stroke-width="1.200" /><path d="M4 14.500H7" stroke="#333" /></svg></button>
            <div class="arrows">
              <button aria-label="Previous page"><svg width="6" height="9" viewBox="0 0 6 9"><path d="M5 1V8L1 4.500Z" fill="none" stroke="#8a8886" /></svg></button>
              <button aria-label="Next page"><svg width="6" height="9" viewBox="0 0 6 9"><path d="M1 1V8L5 4.500Z" fill="none" stroke="#8a8886" /></svg></button>
            </div>
            <a class="tab" href="#nav">Nav</a><a class="tab" href="#profit">Profit</a>
            <a class="tab on" href="#orders">Orders<span class="x">x</span></a><a class="tab" href="#customers">Customers</a>
            <button class="add" aria-label="New page"><svg width="11" height="11" viewBox="0 0 11 11"><path d="M5.500 0V11M0 5.500H11" stroke="#fff" stroke-width="3" /></svg></button>
          </div>
        </div>
        <div class="panes">
          ${["Filters", "Bookmarks", "Visualizations", "Data"].map(
            (p) => html`<section class="pane"><span class="chev">«</span><span class="lab">${p === "Filters" ? html`<svg width="9" height="9" viewBox="0 0 9 9"><path d="M8 0V9M5 1.500V7.500M2 3V6" stroke="#333" /></svg>` : ""}${p}</span></section>`
          )}
        </div>
      </div>
      <div class="status">
        <span>Page 3 of 4</span>
        <div class="zoom"><span class="sign">-</span><input type="range" min="10" max="230" value="128" aria-label="Zoom" /><span class="sign">+</span><span class="pct">128%</span><svg width="14" height="11" viewBox="0 0 14 11"><rect x=".5" y=".5" width="13" height="10" rx="1.500" fill="none" stroke="#444" /><path d="M3 4.500V3H4.500M9.500 3H11V4.500M11 6.500V8H9.500M4.500 8H3V6.500" fill="none" stroke="#444" /></svg></div>
      </div>
      <pbi-taskbar></pbi-taskbar>
      <div class="mark" aria-hidden="true"><span class="ar" lang="ar">مستقل</span><span class="en">mostaql.com</span></div>
    `;
  }
}
